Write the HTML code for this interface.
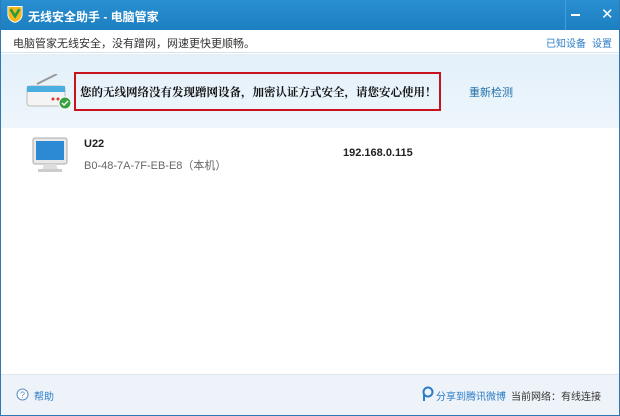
<!DOCTYPE html>
<html><head><meta charset="utf-8"><style>
*{margin:0;padding:0;box-sizing:border-box}
body{width:620px;height:416px;overflow:hidden;font-family:"Liberation Sans","Noto Sans CJK SC",sans-serif;font-size:11px;position:relative;background:#fff;white-space:nowrap}
.win{position:absolute;inset:0;border:1px solid #2f78b3;border-top:none}
.title{position:absolute;left:0;top:0;width:620px;height:30px;background:linear-gradient(#2a8fd0,#1b7fc2);color:#fff;font-size:12px;font-weight:bold}
.sub{position:absolute;left:1px;top:30px;width:618px;height:23px;background:#fff;border-bottom:1px solid #d6e2ec;color:#333}
.banner{position:absolute;left:1px;top:54px;width:618px;height:74px;background:linear-gradient(#e3f0fa,#eef6fc)}
.foot{position:absolute;left:1px;top:374px;width:618px;height:41px;background:#eef3f9;border-top:1px solid #dde5ee}
a{color:#2a7cc7;text-decoration:none}
</style></head><body>
<div class="title">
<svg style="position:absolute;left:7px;top:5px" width="16" height="19" viewBox="0 0 18 20"><path d="M1 1h16v9c0 5-4 8-8 9C5 18 1 15 1 10z" fill="#f5b820" stroke="#fff" stroke-width="1"/><path d="M4 4l5 8 5-8" fill="none" stroke="#2c9a3a" stroke-width="3"/></svg>
<span style="position:absolute;left:28px;top:8px">无线安全助手 - 电脑管家</span>
<div style="position:absolute;left:565px;top:0;width:1px;height:30px;background:#4a9cd6"></div>
<div style="position:absolute;left:571px;top:14px;width:9px;height:2px;background:#fff"></div>
<span style="position:absolute;left:601px;top:5px;font-size:15px;font-weight:normal">✕</span>
</div>
<div class="sub"><span style="position:absolute;left:12px;top:5px">电脑管家无线安全，没有蹭网，网速更快更顺畅。</span>
<a style="position:absolute;left:545px;top:5px;font-size:10px">已知设备</a><a style="position:absolute;left:591px;top:5px;font-size:10px">设置</a></div>
<div class="banner">
<svg style="position:absolute;left:24px;top:20px" width="50" height="36" viewBox="0 0 50 36"><path d="M12 10l20-10" stroke="#999" stroke-width="2"/><rect x="2" y="12" width="38" height="20" rx="3" fill="#f4f4f4" stroke="#bbb"/><rect x="2" y="12" width="38" height="6" fill="#4aaee0"/><circle cx="28" cy="25" r="1.5" fill="#d33"/><circle cx="33" cy="25" r="1.5" fill="#d33"/><circle cx="40" cy="29" r="6" fill="#3aa13f" stroke="#fff"/><path d="M37 29l2 2 4-4" stroke="#fff" stroke-width="1.5" fill="none"/></svg>
<div style="position:absolute;left:73px;top:18px;width:367px;height:39px;border:2px solid #c8121c"></div>
<span style="position:absolute;left:79px;top:30px;font-size:11.5px;font-weight:bold;color:#111;font-family:'Liberation Serif','Noto Serif CJK SC',serif">您的无线网络没有发现蹭网设备，加密认证方式安全，请您安心使用！</span>
<a style="position:absolute;left:468px;top:30px;color:#1f6fa8">重新检测</a>
</div>
<svg style="position:absolute;left:32px;top:137px" width="38" height="36" viewBox="0 0 38 36"><rect x="1" y="1" width="34" height="26" rx="2" fill="#e8e8e8" stroke="#aaa"/><rect x="4" y="4" width="28" height="19" fill="#2c8ad4"/><path d="M12 27h12l2 6H10z" fill="#ddd"/><rect x="6" y="32" width="24" height="3" fill="#ccc"/></svg>
<span style="position:absolute;left:84px;top:138px;font-weight:bold;color:#222">U22</span>
<span style="position:absolute;left:84px;top:157px;color:#666">B0-48-7A-7F-EB-E8（本机）</span>
<span style="position:absolute;left:343px;top:147px;font-weight:bold;color:#222">192.168.0.115</span>
<div class="foot">
<svg style="position:absolute;left:15px;top:13px" width="13" height="13"><circle cx="6.5" cy="6.5" r="5.5" fill="#fff" stroke="#5a8fc5"/><text x="4" y="10" font-size="9" fill="#5a8fc5">?</text></svg>
<a style="position:absolute;left:33px;top:13px;font-size:10px">帮助</a>
<svg style="position:absolute;left:421px;top:11px" width="12" height="16"><circle cx="6" cy="6" r="4.5" fill="none" stroke="#2a7cc7" stroke-width="2"/><path d="M2 8v7" stroke="#2a7cc7" stroke-width="2"/></svg>
<a style="position:absolute;left:435px;top:13px;font-size:10px">分享到腾讯微博</a>
<span style="position:absolute;left:510px;top:13px;color:#333;font-size:10px">当前网络：有线连接</span>
</div>
<div class="win"></div>
</body></html>
